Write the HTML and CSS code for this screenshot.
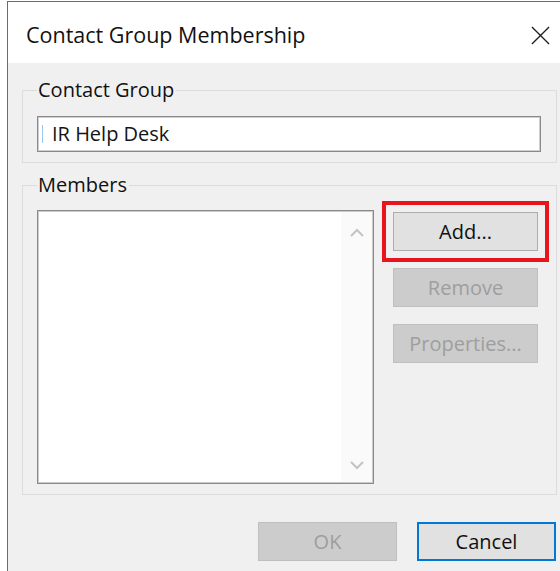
FILE: index.html
```html
<!DOCTYPE html>
<html lang="en">
<head>
<meta charset="utf-8">
<title>Contact Group Membership</title>
<link rel="stylesheet" href="styles.css">
</head>
<body>
  <div class="window">
    <div class="titlebar">
      <span class="title">Contact Group Membership</span>
      <button class="close" aria-label="Close">
        <svg width="20" height="20" viewBox="0 0 20 20"><path d="M1 1 L19 19 M19 1 L1 19" stroke="#1e1e1e" stroke-width="1.4" fill="none"/></svg>
      </button>
    </div>
    <div class="content">
      <fieldset class="group">
        <legend>Contact Group</legend>
        <div class="textbox"><span class="caret"></span>IR Help Desk</div>
      </fieldset>
      <fieldset class="group members">
        <legend>Members</legend>
        <div class="members-row">
          <div class="listbox">
            <div class="list-items"></div>
            <div class="scrolltrack">
              <svg width="16" height="10" viewBox="0 0 16 10"><path d="M2 8 L8 2 L14 8" stroke="#c3c3c3" stroke-width="2" fill="none"/></svg>
              <svg width="16" height="10" viewBox="0 0 16 10"><path d="M2 2 L8 8 L14 2" stroke="#c3c3c3" stroke-width="2" fill="none"/></svg>
            </div>
          </div>
          <div class="side-buttons">
            <button class="btn highlighted">Add...</button>
            <button class="btn disabled">Remove</button>
            <button class="btn disabled">Properties...</button>
          </div>
        </div>
      </fieldset>
      <div class="footer">
        <button class="btn disabled wide">OK</button>
        <button class="btn default wide">Cancel</button>
      </div>
    </div>
  </div>
</body>
</html>
```
FILE: styles.css
```css
html, body {
  margin: 0;
  padding: 0;
  background: #ffffff;
  overflow: hidden;
  font-family: "Open Sans", "Noto Sans", sans-serif;
  color: #111111;
}

.window {
  margin: 1px 0 0 7px;
  width: 552px;
  height: 570px;
  border-top: 1px solid #1a7fd6;
  border-left: 1px solid #1a7fd6;
  display: flex;
  flex-direction: column;
}

.titlebar {
  height: 61px;
  background: #ffffff;
  display: flex;
  align-items: center;
  justify-content: space-between;
  padding: 0 0 0 18px;
  box-sizing: border-box;
}

.title {
  font-size: 21.5px;
  color: #111111;
  margin-top: 4px;
}

.close {
  border: 0;
  background: transparent;
  padding: 0;
  width: 19px;
  height: 19px;
  margin-right: 10px;
  margin-top: 6px;
  display: flex;
}

.close svg {
  width: 19px;
  height: 19px;
}

.content {
  flex: 1;
  background: #f0f0f0;
  padding: 0 0 0 14px;
  display: flex;
  flex-direction: column;
}

.group {
  width: 535px;
  box-sizing: border-box;
  margin: 15px 0 0 0;
  border: 1px solid #dcdcdc;
  padding: 14px 15px 10px 14px;
  min-width: 0;
}

.group legend {
  font-size: 20px;
  line-height: 24px;
  padding: 0 2px 0 1px;
  color: #111111;
}

.members {
  margin-top: 10px;
  padding: 13px 18px 10px 14px;
}

.textbox {
  height: 36px;
  box-sizing: border-box;
  background: #ffffff;
  border: 1px solid #8a8a8a;
  box-shadow: inset 0 0 0 1px #cfcfcf;
  font-size: 20px;
  line-height: 32px;
  padding-left: 4px;
  display: flex;
  align-items: center;
  color: #141414;
}

.caret {
  width: 1px;
  height: 18px;
  background: #9ec6ec;
  margin-right: 9px;
}

.members-row {
  display: flex;
  gap: 19px;
}

.listbox {
  width: 337px;
  height: 274px;
  box-sizing: border-box;
  background: #ffffff;
  border: 1px solid #8a8a8a;
  box-shadow: inset 0 0 0 1px #cbcbcb;
  display: flex;
  padding: 1px;
}

.list-items {
  flex: 1;
}

.scrolltrack {
  width: 31px;
  background: #fafafa;
  display: flex;
  flex-direction: column;
  justify-content: space-between;
  align-items: center;
  padding: 16px 0 12px 0;
}

.side-buttons {
  width: 145px;
  display: flex;
  flex-direction: column;
  gap: 17px;
  padding-top: 2px;
}

.btn {
  height: 39px;
  box-sizing: border-box;
  font-family: "Open Sans", "Noto Sans", sans-serif;
  font-size: 20px;
  background: #e1e1e1;
  border: 1px solid #adadad;
  color: #111111;
  padding: 0;
  margin: 0;
}

.btn.highlighted {
  outline: 4px solid #e8151f;
  outline-offset: 7px;
}

.btn.disabled {
  background: #cccccc;
  border-color: #bfbfbf;
  color: #9e9e9e;
}

.btn.default {
  border: 2px solid #0078d7;
}

.footer {
  width: 534px;
  display: flex;
  justify-content: flex-end;
  gap: 20px;
  margin-top: 27px;
}

.btn.wide {
  width: 139px;
}
```
